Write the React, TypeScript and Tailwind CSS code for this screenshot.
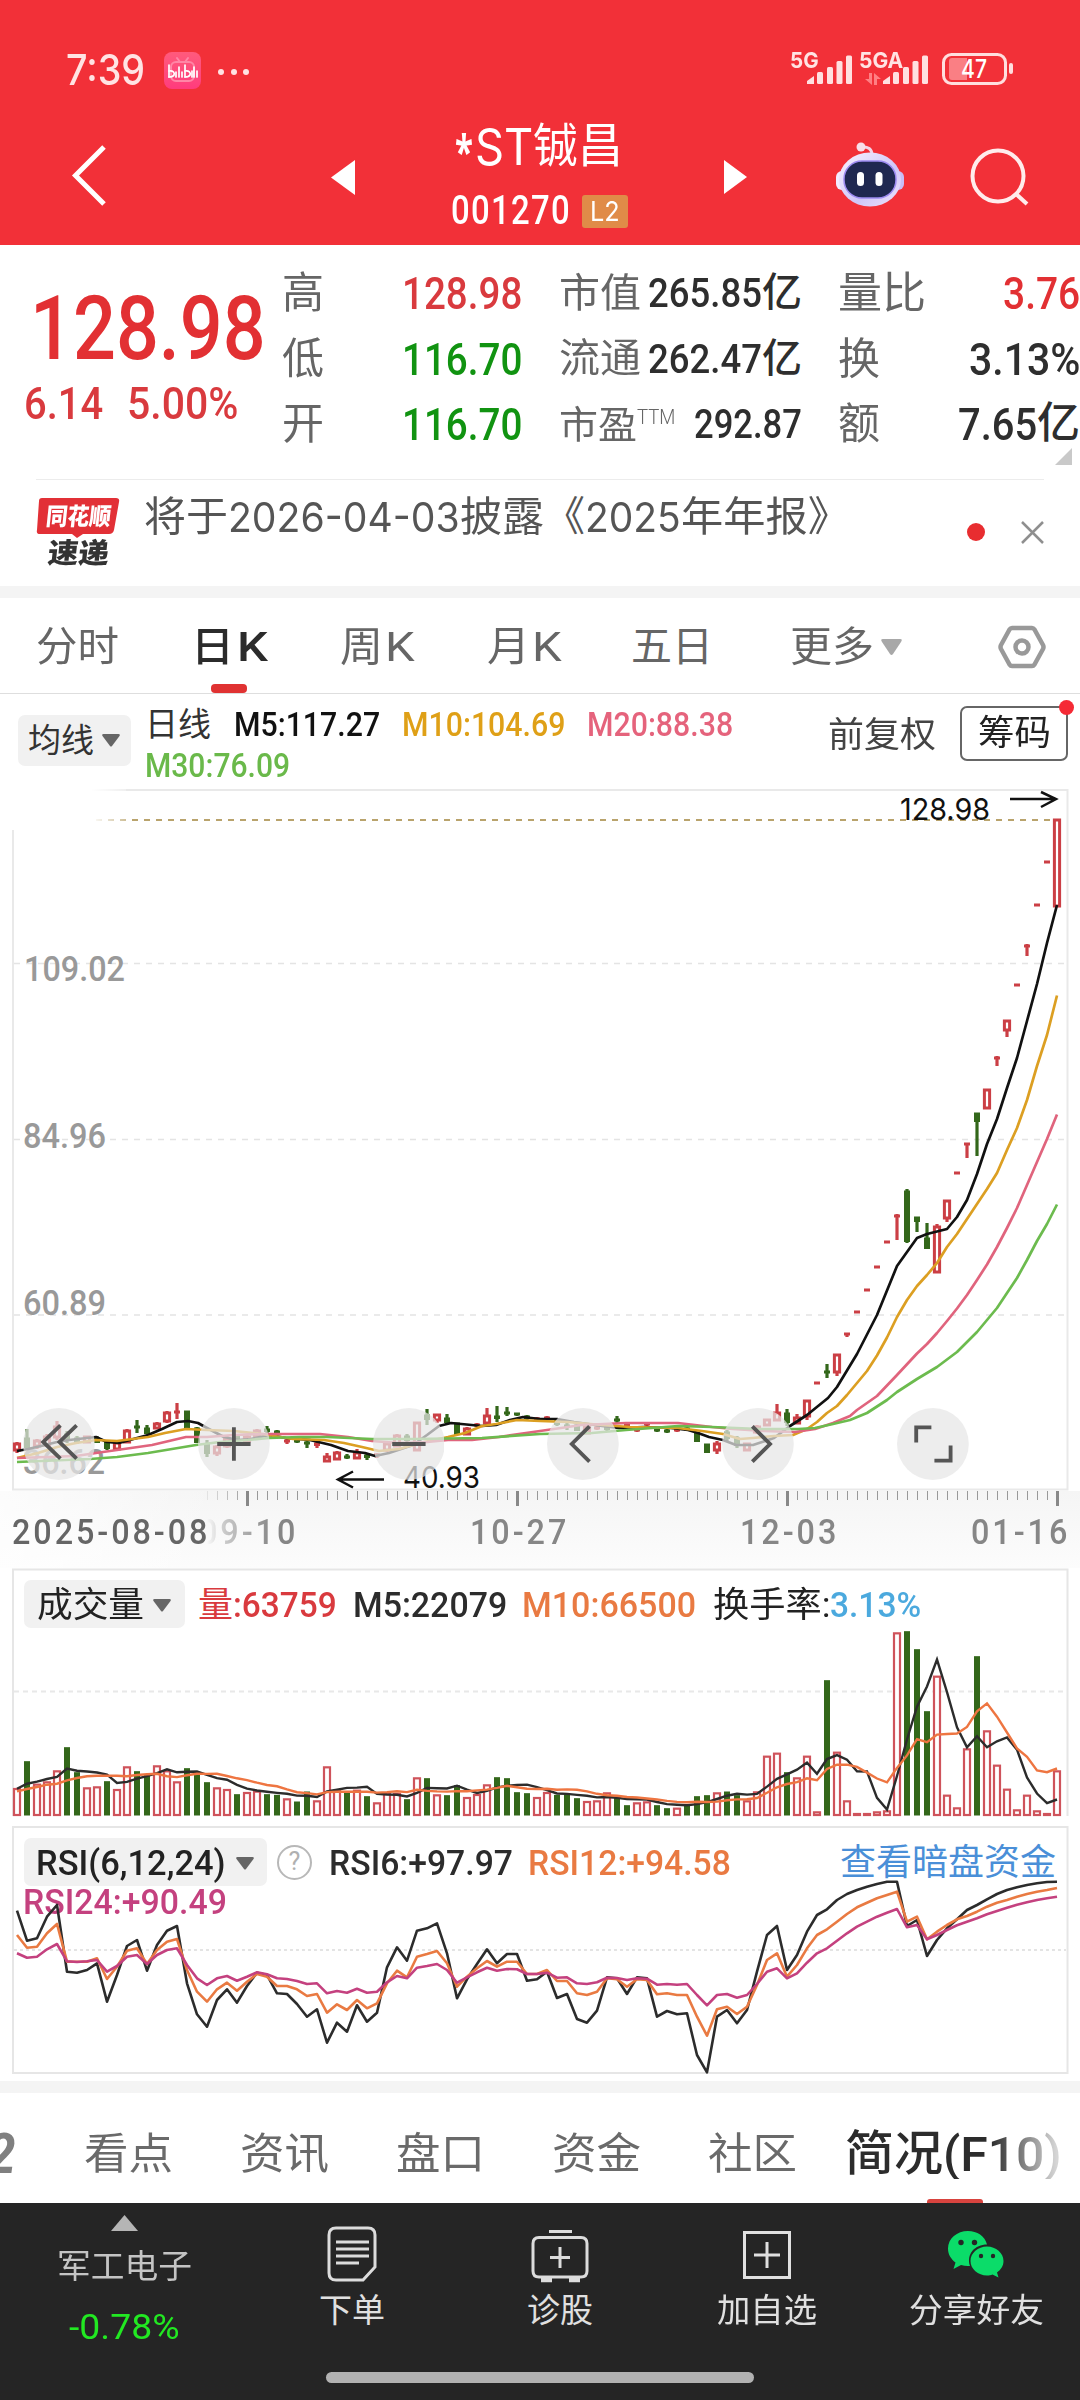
import { useLayoutEffect, useRef, type ReactNode } from "react";

const SANS = "font-[Roboto,'Noto_Sans_CJK_SC',sans-serif]";

/* Single-line text squeezed or stretched horizontally to the width of its box. */
function Fit({ className = "", children }: { className?: string; children: ReactNode }) {
  const box = useRef<HTMLSpanElement>(null);
  const inner = useRef<HTMLSpanElement>(null);
  useLayoutEffect(() => {
    if (!box.current || !inner.current) return;
    const ratio = box.current.clientWidth / inner.current.offsetWidth;
    inner.current.style.transform = `scaleX(${ratio})`;
  });
  return (
    <span ref={box} className={`block shrink-0 leading-none ${className}`}>
      <span ref={inner} className="inline-block origin-left whitespace-nowrap">
        {children}
      </span>
    </span>
  );
}

const COUNT = 105;
const cx = (i: number) => 17 + i * 10;

type Candle = [kind: "r" | "g", top: number, bottom: number, high: number, low: number];

const candles: Candle[] = [
  ["r", 1444, 1450, 1442, 1453], ["g", 1438, 1448, 1429, 1449], ["r", 1441, 1446, 1439, 1449], ["r", 1437, 1445, 1434, 1447],
  ["r", 1427, 1437, 1421, 1440], ["g", 1434, 1440, 1431, 1443], ["g", 1438, 1442, 1436, 1444], ["r", 1437, 1442, 1436, 1443],
  ["g", 1438, 1443, 1436, 1443], ["g", 1442, 1449, 1442, 1450], ["r", 1443, 1449, 1442, 1450], ["r", 1431, 1442, 1429, 1443],
  ["g", 1426, 1428, 1420, 1433], ["g", 1428, 1434, 1425, 1434], ["r", 1424, 1428, 1422, 1429], ["r", 1413, 1421, 1411, 1423],
  ["r", 1411, 1413, 1403, 1419], ["g", 1411, 1428, 1411, 1428], ["g", 1428, 1443, 1427, 1443], ["g", 1444, 1454, 1440, 1457],
  ["r", 1447, 1453, 1445, 1456], ["r", 1439, 1446, 1436, 1448], ["g", 1436, 1439, 1434, 1441], ["r", 1437, 1441, 1434, 1444],
  ["r", 1431, 1436, 1429, 1438], ["g", 1429, 1432, 1426, 1434], ["g", 1431, 1433, 1430, 1435], ["r", 1440, 1442, 1439, 1444],
  ["g", 1440, 1442, 1439, 1443], ["g", 1442, 1444, 1440, 1448], ["r", 1443, 1446, 1442, 1448], ["r", 1457, 1461, 1453, 1461],
  ["r", 1453, 1459, 1451, 1460], ["g", 1456, 1458, 1454, 1459], ["r", 1453, 1458, 1449, 1458], ["g", 1455, 1458, 1453, 1460],
  ["r", 1454, 1456, 1453, 1458], ["r", 1444, 1450, 1442, 1452], ["r", 1436, 1446, 1434, 1447], ["g", 1436, 1441, 1434, 1444],
  ["r", 1423, 1450, 1422, 1451], ["g", 1415, 1420, 1409, 1425], ["r", 1415, 1420, 1414, 1423], ["g", 1418, 1423, 1414, 1424],
  ["g", 1423, 1435, 1423, 1435], ["r", 1429, 1434, 1427, 1435], ["r", 1424, 1426, 1423, 1427], ["r", 1416, 1423, 1408, 1425],
  ["g", 1416, 1419, 1406, 1422], ["g", 1412, 1414, 1407, 1416], ["g", 1413, 1415, 1413, 1416], ["g", 1416, 1419, 1415, 1420],
  ["r", 1418, 1419, 1417, 1420], ["r", 1417, 1419, 1416, 1420], ["g", 1420, 1425, 1419, 1426], ["g", 1425, 1427, 1423, 1430],
  ["g", 1425, 1431, 1424, 1431], ["r", 1426, 1433, 1424, 1434], ["r", 1427, 1429, 1425, 1430], ["g", 1426, 1430, 1425, 1431],
  ["g", 1419, 1421, 1416, 1423], ["r", 1424, 1426, 1423, 1427], ["r", 1429, 1431, 1428, 1432], ["r", 1423, 1424, 1422, 1426],
  ["g", 1429, 1431, 1428, 1432], ["g", 1430, 1432, 1428, 1433], ["r", 1429, 1431, 1428, 1432], ["g", 1428, 1430, 1427, 1431],
  ["g", 1433, 1442, 1433, 1442], ["g", 1444, 1453, 1444, 1453], ["r", 1444, 1450, 1441, 1454], ["g", 1432, 1439, 1430, 1442],
  ["g", 1438, 1446, 1436, 1448], ["r", 1444, 1450, 1443, 1451], ["r", 1427, 1432, 1425, 1434], ["r", 1420, 1425, 1419, 1426],
  ["r", 1413, 1420, 1404, 1421], ["g", 1413, 1423, 1409, 1426], ["r", 1418, 1423, 1414, 1424], ["r", 1401, 1416, 1400, 1420],
  ["r", 1382, 1384, 1382, 1384], ["g", 1371, 1373, 1364, 1378], ["r", 1355, 1372, 1354, 1376], ["r", 1333, 1335, 1333, 1337],
  ["r", 1311, 1313, 1311, 1313], ["r", 1289, 1291, 1289, 1291], ["r", 1266, 1268, 1266, 1268], ["r", 1241, 1243, 1241, 1243],
  ["r", 1215, 1217, 1214, 1240], ["g", 1191, 1242, 1189, 1243], ["g", 1217, 1222, 1217, 1232], ["g", 1238, 1249, 1223, 1249],
  ["r", 1227, 1272, 1224, 1273], ["r", 1201, 1218, 1200, 1222], ["r", 1172, 1174, 1172, 1174], ["r", 1143, 1145, 1143, 1158],
  ["g", 1113, 1122, 1113, 1156], ["r", 1090, 1108, 1089, 1109], ["r", 1057, 1059, 1056, 1066], ["r", 1021, 1030, 1020, 1037],
  ["r", 984, 986, 984, 986], ["r", 945, 947, 944, 956], ["r", 904, 906, 904, 906], ["r", 861, 863, 861, 863],
  ["r", 820, 906, 819, 907],
];

const maShort =
  "17,1451 28,1449 41,1446 57,1442 69,1440 96,1437 107,1442 119,1443 148,1435 162,1429 177,1422 188,1421 198,1423 207,1428 224,1437 238,1440 251,1439 269,1435 286,1438 310,1440 331,1445 348,1451 365,1453 375,1456 389,1453 413,1445 427,1435 439,1426 451,1423 482,1426 496,1425 510,1420 523,1417 540,1419 557,1419 574,1422 602,1426 619,1428 643,1427 671,1428 688,1430 698,1433 709,1437 723,1440 736,1445 753,1445 774,1438 790,1426 807,1415 828,1398 837,1387 857,1354 877,1315 897,1266 917,1238 927,1234 947,1229 957,1217 967,1200 977,1174 987,1144 997,1119 1007,1088 1017,1058 1027,1021 1037,984 1047,943 1057,905";
const maTen =
  "17,1458 38,1453 57,1447 76,1443 96,1440 117,1441 148,1437 165,1433 186,1429 207,1430 234,1431 262,1434 293,1439 324,1440 344,1443 362,1447 379,1451 399,1449 424,1442 448,1437 465,1433 482,1426 496,1424 517,1420 540,1421 568,1422 602,1425 630,1427 678,1428 702,1431 723,1434 740,1439 753,1438 774,1436 793,1435 807,1429 817,1422 827,1413 837,1406 847,1395 857,1383 867,1371 877,1355.5 887,1337.5 897,1317 907,1300 917,1286 927,1275 937,1263 947,1247 957,1234 967,1219 977,1204 987,1189 997,1173 1007,1150 1017,1128 1027,1100 1037,1066 1047,1035 1057,995.5";
const maTwenty =
  "17,1458 76,1456 96,1453 117,1450 152,1445 186,1437 207,1437 234,1435 262,1434 320,1434 348,1437 372,1441 399,1443 427,1442 448,1440 472,1440 499,1437 540,1431 561,1428 581,1425 626,1423 678,1423 712,1427 733,1429 764,1431 795,1432 815,1429 833,1423 850,1416 857,1410 877,1396 897,1375 917,1353.5 927,1344 937,1333 947,1321 957,1308.5 967,1295 977,1280 987,1264.5 997,1247 1007,1228 1017,1208 1027,1185 1037,1162 1047,1139 1057,1114.5";
const maThirty =
  "17,1462 90,1459 117,1457 148,1453 172,1449 196,1445 220,1442 248,1440 269,1438 300,1437 327,1437 372,1439 413,1439 482,1438 540,1434 592,1433 626,1430 678,1426 712,1427 760,1429 798,1429 815,1428 833,1424 850,1420 867,1413 887,1400 897,1392 917,1379 937,1367 957,1352 977,1332 987,1320 997,1308 1007,1293 1017,1278 1027,1260 1037,1241 1047,1224 1057,1204.5";

/* Bar heights in thirds of a pixel; the sign gives the direction of the day. */
const volumes = [
  81, -163, 94, 101, 134, -205, -130, 83, 86, -103, 78, 146, -133, -123, 149, 134, 101, -142, -126, -100, 83, 78, -64, 69, 73,
  -64, -62, 50, -42, -72, 44, 146, 76, -69, 76, -58, 38, 66, 66, -49, 113, -112, 62, -61, -91, 54, 63, 92, -115, -112, -70,
  -67, 54, 69, -62, -64, -52, 42, 44, 68, -54, -31, 38, 41, -31, -22, 22, -31, -58, -61, 68, -72, -61, 44, 71, 178, 187,
  -130, 113, 178, 11, -406, 190, 44, 6, 6, 11, 14, 548, -553, -499, -313, 418, 61, 23, 200, -478, 254, 151, 79, 17, 61, 14,
  6, 134,
];

function average(period: number, lead: number[]) {
  return volumes
    .slice(0, COUNT)
    .map((_, i) => {
      let v = lead[i];
      if (v === undefined) {
        const from = Math.max(0, i - period + 1);
        const part = volumes.slice(from, i + 1);
        v = part.reduce((s, x) => s + Math.abs(x), 0) / part.length;
      }
      return `${cx(i)},${(1815 - v / 3).toFixed(1)}`;
    })
    .join(" ");
}

const rsi6 = [
  272, 362, 355, 290, 255, 455, 458, 450, 430, 545, 465, 378, 360, 452, 375, 332, 318, 490, 583, 620, 540, 508, 548, 498, 458,
  465, 520, 522, 552, 590, 568, 668, 608, 635, 556, 605, 578, 442, 382, 422, 332, 325, 310, 400, 535, 478, 432, 388, 430, 402,
  402, 482, 478, 455, 534, 522, 597, 608, 572, 472, 475, 522, 472, 475, 590, 573, 583, 580, 705, 757, 590, 570, 610, 570, 455,
  345, 318, 450, 405, 335, 285, 268, 240, 222, 210, 200, 192, 185, 185, 318, 300, 408, 360, 325, 298, 270, 255, 238, 222, 210,
  202, 195, 190, 186, 185,
];
const rsi12 = [
  345, 383, 380, 340, 312, 425, 425, 425, 415, 477, 440, 392, 385, 432, 390, 365, 357, 450, 515, 545, 508, 488, 512, 485, 462,
  470, 498, 498, 508, 528, 522, 578, 553, 570, 540, 565, 550, 490, 452, 472, 410, 402, 393, 430, 500, 470, 445, 423, 440, 425,
  425, 462, 462, 450, 483, 483, 520, 525, 515, 475, 478, 500, 478, 480, 523, 520, 525, 525, 590, 647, 568, 560, 582, 560, 495,
  420, 400, 470, 435, 385, 345, 328, 305, 282, 262, 248, 235, 225, 215, 305, 290, 358, 335, 315, 298, 288, 275, 260, 248, 240,
  230, 222, 215, 210, 204,
];
const rsi24 = [
  400, 413, 410, 388, 372, 424, 426, 424, 420, 455, 438, 410, 405, 432, 405, 390, 385, 435, 475, 495, 475, 468, 482, 470, 457,
  463, 475, 477, 483, 492, 490, 520, 513, 518, 506, 518, 515, 487, 468, 475, 443, 438, 432, 450, 488, 472, 457, 443, 452, 447,
  448, 462, 462, 458, 473, 472, 490, 492, 487, 473, 474, 480, 475, 476, 494, 492, 494, 492, 525, 556, 525, 522, 533, 525, 492,
  455, 445, 475, 460, 428, 400, 385, 362, 340, 320, 305, 290, 278, 267, 322, 315, 358, 345, 330, 316, 305, 295, 283, 273, 263,
  254, 247, 240, 235, 230,
];
const rsiLine = (values: number[]) => values.map((v, i) => `${cx(i)},${(1820 + v / 3).toFixed(1)}`).join(" ");

function Signal() {
  return (
    <svg width="46" height="30" viewBox="0 0 46 30" fill="#ffe0e0">
      <path d="M0 29v-3l7-5v8z" />
      <rect x="10" y="17" width="6" height="12" rx="1.5" />
      <rect x="20" y="12" width="6" height="17" rx="1.5" />
      <rect x="29.500" y="6" width="6" height="23" rx="1.500" />
      <rect x="39" y="0.500" width="6" height="28.500" rx="1.500" />
    </svg>
  );
}

function StatusBar() {
  return (
    <div className="relative flex h-[104px] items-start text-[#ffe3e3]">
      <Fit className="mt-[49px] ml-[66px] w-[79px] font-[Inter,sans-serif] text-[42px] font-medium">7:39</Fit>
      <div className="mt-[52px] ml-[19px] flex h-[37px] w-[37px] items-center justify-center rounded-[8px] bg-gradient-to-b from-[#ff5a7c] to-[#ff3b7d]">
        <svg width="37" height="37" viewBox="0 0 37 37" fill="none" stroke="#fff" strokeLinecap="round">
          <g stroke="#ff86a6" strokeWidth="2">
            <rect x="7" y="10" width="23" height="19" rx="5" />
            <path d="M13 6l3 4M24 6l-3 4" />
          </g>
          <g strokeWidth="1.700">
            <path d="M5 13v12M12 20v5M15 15v10M18 20v5M21 13v12M28 19v6M30 15v10M33 19v6" />
            <path d="M5 19c4-1 6 2 5 4s-3 2-5 2M21 19c4-1 6 2 5 4s-3 2-5 2" />
          </g>
        </svg>
      </div>
      <div className="mt-[69px] ml-[17px] flex gap-[6.500px]">
        <i className="size-[6px] rounded-full bg-[#ffe3e3]" />
        <i className="size-[6px] rounded-full bg-[#ffe3e3]" />
        <i className="size-[6px] rounded-full bg-[#ffe3e3]" />
      </div>
      <div className="absolute top-[49px] left-[790px] flex items-start">
        <Fit className="w-[29px] font-[Inter,sans-serif] text-[22px] font-bold">5G</Fit>
        <div className="mt-[6px] -ml-[12px]"><Signal /></div>
        <Fit className="ml-[6px] w-[44px] font-[Inter,sans-serif] text-[22px] font-bold">5GA</Fit>
        <svg className="mt-[24px] -ml-[38px]" width="16" height="12" viewBox="0 0 16 12" fill="#ff7f83">
          <path d="M4 0h3v12L0 6h4zM9 12V0l7 6h-4v6z" />
        </svg>
        <div className="mt-[6px] ml-[2px]"><Signal /></div>
        <svg className="mt-[3px] ml-[13px]" width="72" height="34" viewBox="0 0 72 34">
          <rect x="1.500" y="2.500" width="62" height="29" rx="8" fill="none" stroke="#ffdede" strokeWidth="3" />
          <path d="M7 9q0-3 3-3h15v22H10q-3 0-3-3z" fill="#fa7f84" />
          <rect x="67" y="11" width="4" height="11" rx="2" fill="#ffdede" />
          <text x="19" y="26" textLength="26" lengthAdjust="spacingAndGlyphs" fontFamily="Inter" fontSize="25" fontWeight="500" fill="#fff">47</text>
        </svg>
      </div>
    </div>
  );
}

function Robot() {
  return (
    <svg width="70" height="66" viewBox="0 0 70 66">
      <defs>
        <linearGradient id="shell" x1="0" y1="0" x2="1" y2="1">
          <stop offset="0" stopColor="#fbf4ff" />
          <stop offset="0.600" stopColor="#cfc6f8" />
          <stop offset="1" stopColor="#efe4fb" />
        </linearGradient>
      </defs>
      <path d="M26 5q11-1 11 8" fill="none" stroke="#f3d5e8" strokeWidth="3" />
      <circle cx="26" cy="5" r="4.500" fill="#f8dfea" />
      <rect x="1" y="29" width="12" height="19" rx="6" fill="#f3ecff" />
      <rect x="57" y="29" width="12" height="19" rx="6" fill="#c9bdf6" />
      <ellipse cx="35" cy="37.500" rx="31" ry="27" fill="url(#shell)" />
      <rect x="9" y="19" width="52" height="37" rx="18" fill="#1f2850" stroke="#9c8af0" strokeWidth="1.500" />
      <rect x="22" y="30" width="7" height="14" rx="3.500" fill="#fff" />
      <rect x="40.500" y="30" width="7" height="14" rx="3.500" fill="#fff" />
    </svg>
  );
}

function TitleBar() {
  return (
    <div className="flex h-[141px] items-start text-white">
      <svg className="mt-[40px] ml-[70px]" width="40" height="64" viewBox="0 0 40 64" fill="none" stroke="#fff" strokeWidth="5">
        <path d="M34 3L5.500 31.500L34 60" />
      </svg>
      <svg className="mt-[56px] ml-[221px]" width="24" height="35" viewBox="0 0 24 35" fill="#fff"><path d="M0 17.500L24 0v35z" /></svg>
      <div className="ml-[96px] flex h-full w-[178px] flex-col">
        <div className="mt-[18px] ml-[4px] flex">
          <Fit className="mt-[6px] w-[18px] text-[46px] font-bold">*</Fit>
          <Fit className="ml-[2px] w-[58px] font-[Inter,'Noto_Sans_CJK_SC',sans-serif] text-[50px]">ST</Fit>
          <Fit className={`w-[90px] ${SANS} text-[47px]`}>铖昌</Fit>
        </div>
        <div className="mt-[20px] flex h-[34px] items-center">
          <Fit className={`w-[120px] ${SANS} text-[40px] font-medium tracking-[0.04em]`}>001270</Fit>
          <div className="ml-[11px] flex h-[33px] w-[46px] items-center justify-center rounded-[3px] bg-[#e08b48]">
            <Fit className="w-[30px] font-[Inter,sans-serif] text-[27px]">L2</Fit>
          </div>
        </div>
      </div>
      <svg className="mt-[56px] ml-[95px]" width="23" height="34" viewBox="0 0 23 34" fill="#fff"><path d="M23 17L0 0v34z" /></svg>
      <div className="mt-[38px] ml-[88px]"><Robot /></div>
      <svg className="mt-[42px] ml-[65px]" width="60" height="62" viewBox="0 0 60 62" fill="none" stroke="#ffecec" strokeWidth="4">
        <circle cx="28" cy="30" r="25.500" />
        <path d="M45 47l12 11" />
      </svg>
    </div>
  );
}

function Quote() {
  const label = `${SANS} text-[#666]`;
  return (
    <section className={`flex h-[234px] ${SANS}`}>
      <div className="flex w-[282px] flex-col text-[#e23033]">
        <Fit className="mt-[39px] ml-[30px] w-[236px] text-[89px] font-medium">128.98</Fit>
        <div className="mt-[8px] ml-[24px] flex text-[45px] font-medium text-[#d93a3e]">
          <Fit className="w-[79px]">6.14</Fit>
          <Fit className="ml-[24px] w-[111px]">5.00%</Fit>
        </div>
      </div>
      <div className="mt-[16px] flex w-[240px] flex-col text-[45px] font-medium">
        {[
          ["高", "128.98", "text-[#d93a3e]"],
          ["低", "116.70", "text-[#119311]"],
          ["开", "116.70", "text-[#119311]"],
        ].map(([name, value, color]) => (
          <div key={name} className="flex h-[65.500px] items-center justify-between">
            <Fit className={`w-[42px] text-[43px] font-normal ${label}`}>{name}</Fit>
            <Fit className={`w-[120px] ${color}`}>{value}</Fit>
          </div>
        ))}
      </div>
      <div className="mt-[16px] ml-[37px] flex w-[243px] flex-col text-[41px] font-medium text-[#2e2e2e]">
        <div className="flex h-[65.500px] items-center justify-between">
          <Fit className={`w-[82px] text-[40px] font-normal ${label}`}>市值</Fit>
          <div className="flex"><Fit className="w-[114px]">265.85</Fit><Fit className="w-[40px] text-[40px]">亿</Fit></div>
        </div>
        <div className="flex h-[65.500px] items-center justify-between">
          <Fit className={`w-[82px] text-[40px] font-normal ${label}`}>流通</Fit>
          <div className="flex"><Fit className="w-[114px]">262.47</Fit><Fit className="w-[40px] text-[40px]">亿</Fit></div>
        </div>
        <div className="flex h-[65.500px] items-center">
          <Fit className={`w-[78px] text-[38px] font-normal ${label}`}>市盈</Fit>
          <Fit className={`mb-[14px] w-[38px] text-[21px] font-light ${label}`}>TTM</Fit>
          <Fit className="ml-auto w-[108px]">292.87</Fit>
        </div>
      </div>
      <div className="mt-[16px] ml-[36px] flex w-[242px] flex-col text-[45px] font-medium text-[#2e2e2e]">
        <div className="flex h-[65.500px] items-center justify-between">
          <Fit className={`w-[88px] text-[43px] font-normal ${label}`}>量比</Fit>
          <Fit className="w-[77px] text-[#e23033]">3.76</Fit>
        </div>
        <div className="flex h-[65.500px] items-center justify-between">
          <Fit className={`w-[42px] text-[43px] font-normal ${label}`}>换</Fit>
          <Fit className="w-[111px]">3.13%</Fit>
        </div>
        <div className="relative flex h-[65.500px] items-center justify-between">
          <Fit className={`w-[42px] text-[43px] font-normal ${label}`}>额</Fit>
          <div className="flex"><Fit className="w-[79px]">7.65</Fit><Fit className="w-[43px] text-[43px]">亿</Fit></div>
          <svg className="absolute top-[56px] right-[8px]" width="17" height="17" viewBox="0 0 17 17" fill="#c9c9c9"><path d="M17 0v17H0z" /></svg>
        </div>
      </div>
    </section>
  );
}

function News() {
  return (
    <section className={`mr-[36px] ml-[36px] flex h-[107px] items-start border-t border-[#ececec] ${SANS}`}>
      <div className="relative mt-[18px] flex w-[84px] flex-col items-center">
        <svg className="absolute top-0 left-0" width="84" height="40" viewBox="0 0 84 40" fill="#e23036">
          <path d="M6 0h74q4 0 3 4l-5 28q-1 4-5 4H47l-6 4-5-4H4q-4 0-3-4L3 3q0-3 3-3z" />
        </svg>
        <div className="relative flex h-[37px] items-center text-[24px] text-white">
          <Fit className="w-[65px] -skew-x-6 font-black">同花顺</Fit>
        </div>
        <Fit className="mt-[5px] w-[61px] -skew-x-6 text-[28px] font-black text-[#333]">速递</Fit>
      </div>
      <div className="mt-[17px] ml-[24px] flex text-[41px] text-[#555]">
        <Fit className="w-[84px]">将于</Fit>
        <Fit className="w-[232px] font-[Inter,sans-serif]">2026-04-03</Fit>
        <Fit className="w-[84px]">披露</Fit>
        <Fit className="w-[41px]">《</Fit>
        <Fit className="w-[96px] font-[Inter,sans-serif]">2025</Fit>
        <Fit className="w-[169px]">年年报》</Fit>
      </div>
      <div className="mt-[43px] ml-auto size-[18px] rounded-full bg-[#e82d30]" />
      <svg className="mt-[41px] ml-[36px]" width="23" height="23" viewBox="0 0 23 23" stroke="#8f8f8f" strokeWidth="2.500"><path d="M1 1l21 21M22 1L1 22" /></svg>
    </section>
  );
}

function PeriodTabs() {
  return (
    <nav className={`relative flex h-[96px] items-center border-b border-[#dedede] pt-[3px] text-[41px] text-[#666] ${SANS}`}>
      <Fit className="ml-[36px] w-[83px]">分时</Fit>
      <div className="ml-[72px] flex w-[77px] font-medium text-[#2b2b2b]">
        <Fit className="w-[43px]">日</Fit><Fit className="ml-[3px] w-[31px]">K</Fit>
        <i className="absolute bottom-0 left-[211px] h-[9px] w-[36px] rounded-[4px] bg-[#e03232]" />
      </div>
      <div className="ml-[72px] flex w-[76px]"><Fit className="w-[43px]">周</Fit><Fit className="ml-[2px] w-[30px]">K</Fit></div>
      <div className="ml-[71px] flex w-[76px]"><Fit className="w-[43px]">月</Fit><Fit className="ml-[2px] w-[30px]">K</Fit></div>
      <Fit className="ml-[68px] w-[82px]">五日</Fit>
      <Fit className="ml-[77px] w-[84px]">更多</Fit>
      <svg className="ml-[7px]" width="21" height="17" viewBox="0 0 21 17" fill="#a8a8a8"><path d="M2 0h17q3 0 1 3l-8 12q-1.500 2-3 0L1 3q-2-3 1-3z" /></svg>
      <svg className="ml-[96px]" width="48" height="44" viewBox="0 0 48 44" fill="none" stroke="#999" strokeWidth="4.500" strokeLinejoin="round">
        <path d="M14 3h20q1.500 0 2.500 1.500L45 20q1 2 0 4l-8.500 15.500Q35.500 41 34 41H14q-1.500 0-2.500-1.500L3 24q-1-2 0-4l8.500-15.500Q12.500 3 14 3z" />
        <circle cx="24" cy="22" r="6.500" />
      </svg>
    </nav>
  );
}

function Caret({ className = "" }: { className?: string }) {
  return (
    <svg className={className} width="18" height="13" viewBox="0 0 18 13" fill="#666"><path d="M1.500 0h15q2 0 1 2L10 12q-1 1-2 0L.5 2q-1-2 1-2z" /></svg>
  );
}

function MainChartHeader() {
  return (
    <div className={`flex h-[95px] items-start text-[35px] ${SANS}`}>
      <div className="mt-[21px] ml-[18px] flex h-[51px] w-[113px] items-center rounded-[7px] bg-[#f1f1f1] text-[33px] text-[#333]">
        <Fit className="ml-[10px] w-[66px]">均线</Fit>
        <Caret className="ml-[8px]" />
      </div>
      <div className="mt-[11px] ml-[14px] flex w-[600px] flex-col">
        <div className="flex h-[38px] items-center text-[34px]">
          <Fit className="w-[66px] text-[33px] text-[#333]">日线</Fit>
          <Fit className="ml-[23px] w-[146px] font-medium text-[#111]">M5:117.27</Fit>
          <Fit className="ml-[22px] w-[163px] font-medium text-[#dfa017]">M10:104.69</Fit>
          <Fit className="ml-[22px] w-[146px] font-medium text-[#e5637c]">M20:88.38</Fit>
        </div>
        <div className="mt-[3px] flex h-[38px] items-center text-[34px]">
          <Fit className="w-[145px] font-medium text-[#6ab94a]">M30:76.09</Fit>
        </div>
      </div>
      <Fit className="mt-[24px] ml-[83px] w-[108px] text-[35px] text-[#444]">前复权</Fit>
      <div className="relative mt-[12px] ml-[24px] flex h-[55px] w-[108px] items-center justify-center rounded-[7px] border-2 border-[#666] text-[35px] text-[#222]">
        <Fit className="w-[73px]">筹码</Fit>
        <i className="absolute -top-[8px] -right-[8px] size-[15px] rounded-full bg-[#f52a35]" />
      </div>
    </div>
  );
}

function CandleShape({ i, data }: { i: number; data: Candle }) {
  const [kind, top, bottom, high, low] = data;
  const x = cx(i);
  const color = kind === "r" ? "#cb3f45" : "#33671a";
  const hollow = kind === "r" && bottom - top > 3;
  return (
    <g>
      {high < top && <path d={`M${x} ${high}V${top}`} stroke={color} strokeWidth="3.2" />}
      {low > bottom && <path d={`M${x} ${bottom}V${low}`} stroke={color} strokeWidth="3.2" />}
      {hollow ? (
        <rect x={x - 2.6} y={top} width="5.200" height={bottom - top} fill="#fff" stroke={color} strokeWidth="3" />
      ) : (
        <rect x={x - 3} y={top - 0.5} width="6" height={Math.max(3, bottom - top + 0.5)} fill={color} />
      )}
    </g>
  );
}

const buttonIcons = [
  "M37 17L20 33.500L37 50M53 17L36 33.500L53 50",
  "M19 35.500H52M35.500 19V52",
  "M19 35.500H52",
  "M42 18L24.500 35.500L42 53",
  "M30 18L47.500 35.500L30 53",
  "M34 19H19V34M37 52H53V37",
];

function MainChart() {
  return (
    <div className="relative h-[702px]">
      <svg className="block" width="1080" height="702" viewBox="0 789 1080 702" fill="none" fontFamily="Inter">
        <defs>
          <linearGradient id="corner" x1="0" x2="1"><stop offset="0" stopColor="#fff" /><stop offset="0.700" stopColor="#fff" /><stop offset="1" stopColor="#fff" stopOpacity="0.300" /></linearGradient>
        </defs>
        <rect x="13" y="790" width="1054.500" height="699.500" stroke="#e9e9e9" strokeWidth="2" />
        <path d="M14 963.500H1066M14 1139.500H1066M14 1315H1066" stroke="#e4e4e4" strokeWidth="1.500" strokeDasharray="6 6" />
        <path d="M96 820H1052" stroke="#b9a36c" strokeWidth="1.800" strokeDasharray="6 6" />
        <rect x="10" y="786" width="116" height="44" fill="url(#corner)" />
        <g fill="#999" fontSize="35" fontFamily="Roboto" fontWeight="500">
          <text x="24" y="981" textLength="101" lengthAdjust="spacingAndGlyphs">109.02</text>
          <text x="23" y="1148" textLength="83" lengthAdjust="spacingAndGlyphs">84.96</text>
          <text x="23" y="1315" textLength="83" lengthAdjust="spacingAndGlyphs">60.89</text>
          <text x="23" y="1474" textLength="82" lengthAdjust="spacingAndGlyphs">36.62</text>
        </g>
        {candles.map((c, i) => <CandleShape key={i} i={i} data={c} />)}
        <g strokeWidth="2.700" strokeLinejoin="round">
          <polyline points={maShort} stroke="#111" />
          <polyline points={maTen} stroke="#dc9f22" />
          <polyline points={maTwenty} stroke="#e0647d" />
          <polyline points={maThirty} stroke="#6cbb4e" />
        </g>
        <g fill="#111" fontSize="30">
          <text x="900" y="820" textLength="90" lengthAdjust="spacingAndGlyphs">128.98</text>
          <text x="403" y="1488" textLength="77" lengthAdjust="spacingAndGlyphs">40.93</text>
        </g>
        <path d="M1010 799H1056M1041 792L1056 799L1041 807M384 1479.500H338M353 1471.500L338 1479.500L353 1487.500" stroke="#111" strokeWidth="2.500" />
      </svg>
      <div className="absolute top-[619px] left-[23px] flex gap-[103px]">
        {buttonIcons.map((d) => (
          <svg key={d} width="71.800" height="72" viewBox="0 0 71 71">
            <circle cx="35.500" cy="35.500" r="35.500" fill="#e6e6e6" fillOpacity="0.720" />
            <path d={d} fill="none" stroke="#555" strokeWidth="3.800" />
          </svg>
        ))}
      </div>
    </div>
  );
}

function DateAxis() {
  const minor = Array.from({ length: 86 }, (_, k) => 207 + k * 10);
  return (
    <div className={`relative h-[77px] bg-gradient-to-b from-[#f5f5f5] to-[#fcfcfc] text-[35px] text-[#868686] ${SANS}`}>
      <div className="absolute top-0 left-0 h-[77px] w-[220px] bg-gradient-to-r from-white/70 to-transparent" />
      <svg className="relative block" width="1080" height="16" viewBox="0 0 1080 16">
        {minor.map((x) => (
          <path key={x} d={`M${x + 0.5} 0V9`} stroke="#999" strokeWidth="1" opacity={x < 240 ? (x - 197) / 50 : 1} />
        ))}
        <path d="M247.500 0V15M517.500 0V15M787.500 0V15M1057.500 0V15" stroke="#888" strokeWidth="3" />
      </svg>
      <div className="relative flex pt-[8px] font-medium tracking-[0.09em]">
        <Fit className="ml-[12px] w-[198px] text-[#666]">2025-08-08</Fit>
        <Fit className="-ml-[11px] w-[99px] [mask-image:linear-gradient(90deg,transparent_8%,rgba(0,0,0,0.4)_25%,black_75%)]">09-10</Fit>
        <Fit className="ml-[172px] w-[99px]">10-27</Fit>
        <Fit className="ml-[171px] w-[99px]">12-03</Fit>
        <Fit className="ml-[132px] w-[99px]">01-16</Fit>
      </div>
    </div>
  );
}

function VolumePanel() {
  return (
    <section className={`relative h-[258px] ${SANS}`}>
      <svg className="absolute inset-0" width="1080" height="258" viewBox="0 1568 1080 258" fill="none">
        <path d="M13 1816V1569.500H1067.500V1816" stroke="#e6e6e6" strokeWidth="2" />
        <path d="M14 1691.500H1066" stroke="#e8e8e8" strokeWidth="2" strokeDasharray="5 4" />
        {volumes.map((v, i) => {
          const h = Math.abs(v) / 3;
          return v < 0 ? (
            <rect key={i} x={cx(i) - 3} y={1815.5 - h} width="6" height={h} fill="#33671a" />
          ) : (
            <rect key={i} x={cx(i) - 3} y={1816 - h} width="6" height={Math.max(1, h - 1)} fill="#fff" stroke="#cf535b" strokeWidth="2.200" />
          );
        })}
        <polyline points={average(5, [79, 94, 100, 108])} stroke="#2c2c2c" strokeWidth="2.400" />
        <polyline points={average(10, [71, 78, 84, 91, 94, 104, 111, 116, 118])} stroke="#ee7541" strokeWidth="2.400" />
      </svg>
      <div className="relative flex h-[48px] translate-y-[12px] items-center text-[35px] font-medium">
        <div className="ml-[24px] flex h-[48px] w-[161px] items-center rounded-[7px] bg-[#f1f1f1] pt-[2px] font-normal text-[#222]">
          <Fit className="ml-[13px] w-[107px]">成交量</Fit>
          <Caret className="ml-[9px]" />
        </div>
        <Fit className="mt-[2px] ml-[13px] w-[35px] font-normal text-[#d93a3e]">量</Fit>
        <Fit className="mt-[2px] w-[104px] text-[#d93a3e]">:63759</Fit>
        <Fit className="mt-[2px] ml-[16px] w-[154px] text-[#2c2c2c]">M5:22079</Fit>
        <Fit className="mt-[2px] ml-[15px] w-[174px] text-[#e97a42]">M10:66500</Fit>
        <Fit className="mt-[2px] ml-[17px] w-[117px] font-normal text-[#222]">换手率:</Fit>
        <Fit className="mt-[2px] w-[91px] text-[#4ba9de]">3.13%</Fit>
      </div>
    </section>
  );
}

function RsiPanel() {
  return (
    <section className={`relative h-[255px] ${SANS}`}>
      <svg className="absolute inset-0" width="1080" height="255" viewBox="0 1826 1080 255" fill="none">
        <rect x="13" y="1827" width="1054.500" height="246" stroke="#e6e6e6" strokeWidth="2" />
        <path d="M14 1950H1066" stroke="#e4e4e4" strokeWidth="2" strokeDasharray="3 3" />
      </svg>
      <div className="relative flex h-[48px] translate-y-[12px] items-center text-[35px] font-medium">
        <div className="ml-[24px] flex h-[48px] w-[243px] items-center rounded-[7px] bg-[#f1f1f1] pt-[2px] text-[#222]">
          <Fit className="ml-[12px] w-[190px]">RSI(6,12,24)</Fit>
          <Caret className="ml-[10px]" />
        </div>
        <div className="ml-[10px] flex size-[35px] items-center justify-center rounded-full border-[2.500px] border-[#b8b8b8] text-[25px] font-normal text-[#b0b0b0]">?</div>
        <Fit className="mt-[2px] ml-[17px] w-[184px] text-[#2c2c2c]">RSI6:+97.97</Fit>
        <Fit className="mt-[2px] ml-[15px] w-[203px] text-[#e97a42]">RSI12:+94.58</Fit>
        <Fit className="mt-[2px] ml-[109px] w-[216px] text-[36px] font-normal text-[#4a8fd8]">查看暗盘资金</Fit>
      </div>
      <Fit className="relative mt-[11px] ml-[23px] w-[204px] text-[35px] font-medium text-[#c4417f]">RSI24:+90.49</Fit>
      <svg className="absolute inset-0" width="1080" height="255" viewBox="0 1826 1080 255" fill="none" strokeWidth="2.600" strokeLinejoin="round">
        <polyline points={rsiLine(rsi6)} stroke="#2c2c2c" />
        <polyline points={rsiLine(rsi12)} stroke="#e97a42" />
        <polyline points={rsiLine(rsi24)} stroke="#c4417f" />
      </svg>
    </section>
  );
}

function InfoTabs() {
  return (
    <nav className={`relative flex h-[110px] items-center overflow-hidden pt-[12px] text-[43px] text-[#6a6a6a] ${SANS}`}>
      <div className="flex w-[16px] justify-end overflow-hidden">
        <Fit className="w-[56px] text-[56px] font-bold text-[#808080] italic">L2</Fit>
      </div>
      <Fit className="ml-[68px] w-[89px]">看点</Fit>
      <Fit className="ml-[67px] w-[89px]">资讯</Fit>
      <Fit className="ml-[67px] w-[89px]">盘口</Fit>
      <Fit className="ml-[67px] w-[89px]">资金</Fit>
      <Fit className="ml-[67px] w-[89px]">社区</Fit>
      <Fit className="ml-[48px] w-[98px] text-[48px] font-medium text-[#2c2c2c]">简况</Fit>
      <Fit className="w-[119px] text-[49px] font-medium text-[#2c2c2c] [mask-image:linear-gradient(90deg,black_40%,rgba(0,0,0,0.2)_95%)]">(F10)</Fit>
      <i className="absolute bottom-0 left-[927px] h-[4px] w-[56px] rounded-t-[3px] bg-[#d9443f]" />
    </nav>
  );
}

function BottomBar() {
  const cell = "flex flex-col items-center";
  return (
    <footer className={`relative h-[197px] bg-[#252525] text-[33px] text-[#e0e0e0] ${SANS}`}>
      <div className="flex">
        <div className={`${cell} ml-[24px] w-[200px]`}>
          <svg className="mt-[12px]" width="27" height="16" viewBox="0 0 27 16" fill="#b5b5b5"><path d="M13.500 0L27 16H0z" /></svg>
          <Fit className="mt-[19px] w-[135px] text-[#c4c4c4]">军工电子</Fit>
          <Fit className="mt-[27px] w-[111px] text-[35px] text-[#22e822]">-0.78%</Fit>
        </div>
        <div className={`${cell} ml-[28px] w-[200px]`}>
          <svg className="mt-[23px]" width="50" height="57" viewBox="0 0 50 57" fill="none" stroke="#dcdcdc" strokeWidth="3">
            <path d="M9 2h32q7 0 7 7v32L36 54H9q-7 0-7-7V9q0-7 7-7z" />
            <path d="M9 16H42M9 23H42M9 30H42M9 37H32" strokeWidth="2.800" />
          </svg>
          <Fit className="mt-[11px] w-[66px]">下单</Fit>
        </div>
        <div className={`${cell} ml-[8px] w-[200px]`}>
          <svg className="mt-[27px]" width="60" height="53" viewBox="0 0 60 53" fill="none" stroke="#dcdcdc" strokeWidth="3">
            <path d="M9 7.500h42q6 0 6 6V41q0 6-6 6H9q-6 0-6-6V13.500q0-6 6-6z" />
            <path d="M19 1.500H42M30 17V38M20 27.500H40" />
            <path d="M11 50H22M39 50H50" strokeWidth="4.500" />
          </svg>
          <Fit className="mt-[11px] w-[66px]">诊股</Fit>
        </div>
        <div className={`${cell} ml-[7px] w-[200px]`}>
          <svg className="mt-[28px]" width="48" height="48" viewBox="0 0 48 48" fill="none" stroke="#e0e0e0" strokeWidth="3">
            <rect x="1.500" y="1.500" width="45" height="45" /><path d="M24 11V37M11 24H37" />
          </svg>
          <Fit className="mt-[15px] w-[100px]">加自选</Fit>
        </div>
        <div className={`${cell} ml-[9px] w-[200px]`}>
          <svg className="mt-[27px]" width="56" height="50" viewBox="0 0 56 50" fill="#0bdc69">
            <path d="M20 1C9 1 0 8.500 0 18.500c0 6 3 10.500 7.500 14L5.500 39l7.500-4c3 1 6 1.200 9 1C18 24 27 14.500 39 14.500 37 6 29 1 20 1z" />
            <path d="M39 16.500c-9 0-16.500 6.500-16.500 14.500S30 45.500 39 45.500c2 0 4-.4 5.500-1l6 3-1.500-5c4-3 6.500-6.500 6.500-11.500 0-8-7.500-14.500-16.500-14.500z" />
            <g fill="#252525"><circle cx="13" cy="12.500" r="2.700" /><circle cx="26.500" cy="12.500" r="2.700" /><circle cx="33" cy="26" r="2.200" /><circle cx="45" cy="26" r="2.200" /></g>
          </svg>
          <Fit className="mt-[14px] w-[135px]">分享好友</Fit>
        </div>
      </div>
      <i className="absolute bottom-[17px] left-[326px] h-[11px] w-[428px] rounded-full bg-[#b2b2b2]" />
    </footer>
  );
}

export default function App() {
  return (
    <main className="flex h-[2400px] w-[1080px] flex-col overflow-hidden bg-white">
      <header className="h-[245px] bg-[#f23038]">
        <StatusBar />
        <TitleBar />
      </header>
      <Quote />
      <News />
      <div className="h-[12px] bg-[#f4f4f4]" />
      <PeriodTabs />
      <MainChartHeader />
      <MainChart />
      <DateAxis />
      <VolumePanel />
      <RsiPanel />
      <div className="h-[12px] bg-[#f4f4f4]" />
      <InfoTabs />
      <BottomBar />
    </main>
  );
}
